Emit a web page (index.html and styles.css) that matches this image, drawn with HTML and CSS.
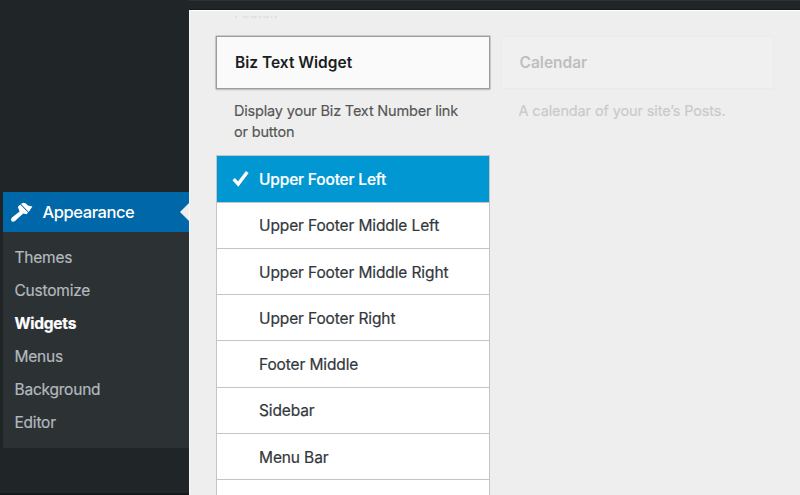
FILE: index.html
```
<!DOCTYPE html>
<html lang="en">
<head>
<meta charset="utf-8">
<title>Widgets</title>
<link rel="stylesheet" href="styles.css">
</head>
<body>
<div class="app">
  <nav class="sidebar">
    <div class="menu">
      <a class="menu-head">
        <svg class="brush" viewBox="0 0 24 22"><path fill="#fff" d="M7.8 6 L10.2 3.6 L18 11.6 L16.6 13.2 L13.4 12.6 L11 14.6 L5 20 Q3 21.4 1.4 20 Q.2 18.4 2 16.6 L9.6 10.6 Z M11 3 L13 1.8 L15.6 2.2 L18 4.6 L22.4 5.4 L18.7 10.9Z"/></svg>
        <span>Appearance</span>
        <i class="notch"></i>
      </a>
      <ul class="submenu">
        <li>Themes</li>
        <li>Customize</li>
        <li class="current">Widgets</li>
        <li>Menus</li>
        <li>Background</li>
        <li>Editor</li>
      </ul>
    </div>
  </nav>
  <div class="page">
    <div class="topbar"></div>
    <main class="content">
      <div class="previous">Footer.</div>
      <div class="columns">
        <section class="widget">
          <h3>Biz Text Widget</h3>
          <p>Display your Biz Text Number link<br>or button</p>
          <ul class="areas">
            <li class="selected"><svg class="check" viewBox="0 0 16 16"><path d="M1.6 8.6 L5.8 13.2 L14.4 1.8" fill="none" stroke="#fff" stroke-width="3.2"/></svg>Upper Footer Left</li>
            <li>Upper Footer Middle Left</li>
            <li>Upper Footer Middle Right</li>
            <li>Upper Footer Right</li>
            <li>Footer Middle</li>
            <li>Sidebar</li>
            <li>Menu Bar</li>
            <li></li>
          </ul>
        </section>
        <section class="widget faded">
          <h3>Calendar</h3>
          <p>A calendar of your site’s Posts.</p>
        </section>
      </div>
    </main>
  </div>
</div>
</body>
</html>
```

FILE: styles.css
```
* { box-sizing: border-box; }
body { margin: 0; font-family: Inter, "Liberation Sans", sans-serif; }
ul, h3, p { margin: 0; padding: 0; list-style: none; }
.app { display: flex; width: 800px; height: 495px; overflow: hidden; background: #202528; }
.sidebar { width: 189px; flex: none; padding-top: 192px; border-bottom: 2px solid #15191b; }
.menu { border-left: 3px solid #1f2427; background: #2c3134; height: 256px; }
.menu-head { position: relative; display: flex; align-items: center; height: 40px; padding-left: 7px; background: #0068a8; color: #fff; font-size: 16.5px; font-weight: 500; }
.menu-head span { letter-spacing: -.43px; }
.brush { width: 24px; height: 22px; margin-right: 8.5px; }
.notch { position: absolute; right: 0; top: 11px; border: 9px solid transparent; border-left: 0; border-right-color: #eee; }
.submenu { padding: 9px 0 0 11.5px; color: #b4b9be; font-size: 15.5px; line-height: 33.1px; letter-spacing: -.22px; -webkit-text-stroke: .2px; }
.submenu .current { color: #fff; font-weight: 700; letter-spacing: -.25px; }
.page { flex: 1; display: flex; flex-direction: column; }
.topbar { height: 10px; flex: none; border-top: 1px solid #2c3134; border-bottom: 1px solid #15191b; }
.content { flex: 1; min-height: 0; overflow: hidden; padding-left: 26px; background: #eee; border-top: 1px solid #fff; border-left: 1px solid #f8f8f8; }
.previous { height: 26px; padding-left: 18px; color: #ddd; font-size: 14.5px; line-height: 4px; letter-spacing: -.6px; clip-path: inset(5px 0 0 0); }
.columns { display: flex; gap: 10.5px; }
.widget { width: 274px; flex: none; }
.widget h3 { height: 53px; margin-top: -1px; padding-left: 18px; border: 1px solid #9b9d9f; box-shadow: 0 0 0 .5px #aaa, 0 1px 2px #0002; background: #fafafa; color: #191e23; font-size: 15.5px; font-weight: 600; line-height: 51px; }
.widget p { height: 66.3px; padding: 10.8px 0 0 18px; color: #555; font-size: 14.5px; line-height: 21.3px; letter-spacing: -.18px; -webkit-text-stroke: .15px; }
.areas { border: 1px solid #c4c4c4; background: #fff; }
.areas li { display: flex; align-items: center; height: 46.3px; padding-left: 42px; padding-top: 1px; border-bottom: 1px solid #c4c4c4; color: #32373c; font-size: 15.5px; letter-spacing: -.12px; position: relative; -webkit-text-stroke: .2px; }
.areas .selected { background: #0097d3; color: #fff; font-weight: 500; letter-spacing: -.17px; }
.check { position: absolute; left: 15px; top: 14px; width: 17px; height: 17px; }
.faded h3 { width: 273px; border-color: #ebebeb; box-shadow: none; background: #f0f0f0; color: #bdbfc0; }
.faded p { color: #cacaca; letter-spacing: -.12px; }
```
